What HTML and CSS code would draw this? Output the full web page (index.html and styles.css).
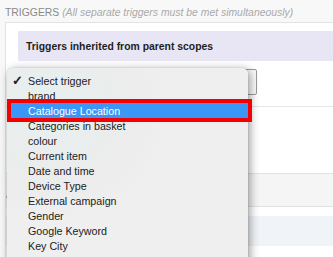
FILE: index.html
```html
<!DOCTYPE html>
<html>
<head>
<meta charset="utf-8">
<link rel="stylesheet" href="styles.css">
</head>
<body>
<div class="page">
  <div class="heading">TRIGGERS <em>(All separate triggers must be met simultaneously)</em></div>
  <div class="panel">
    <div class="inherited">Triggers inherited from parent scopes</div>
    <div class="select-row"><div class="select"></div></div>
    <div class="divider"></div>
    <div class="band grey"><span class="label">A</span></div>
    <div class="band blue"></div>
  </div>
  <ul class="menu">
    <li class="checked"><span class="check">✓</span>Select trigger</li>
    <li>brand</li>
    <li class="active">Catalogue Location</li>
    <li>Categories in basket</li>
    <li>colour</li>
    <li>Current item</li>
    <li>Date and time</li>
    <li>Device Type</li>
    <li>External campaign</li>
    <li>Gender</li>
    <li>Google Keyword</li>
    <li>Key City</li>
    <li>Homepage</li>
  </ul>
</div>
</body>
</html>
```

FILE: styles.css
```css
html, body {
  margin: 0;
  padding: 0;
  width: 333px;
  height: 257px;
  overflow: hidden;
  background: #f8f8f8;
  font-family: "Liberation Sans", Arial, sans-serif;
}
.page {
  position: relative;
  height: 257px;
  overflow: hidden;
}
.heading {
  height: 22px;
  padding-left: 5px;
  font-size: 10.4px;
  line-height: 26px;
  color: #8a8a8a;
  white-space: nowrap;
}
.heading em {
  color: #a9a9a9;
}
.panel {
  margin-left: 5px;
  margin-right: -20px;
  background: #fff;
  border: 1px solid #e3e3e3;
  height: 240px;
}
.inherited {
  margin: 8px 0 0 12px;
  height: 30px;
  background: #e8e6f4;
  font-size: 10.4px;
  font-weight: bold;
  color: #1e1e1e;
  line-height: 31px;
  padding-left: 8px;
}
.select-row {
  margin-top: 8px;
  height: 26px;
  padding-left: 11px;
}
.select {
  width: 238px;
  height: 24px;
  border: 1px solid #9a9a9a;
  border-radius: 2px;
  background: #fafafa;
}
.divider {
  margin-top: 11px;
  height: 1px;
  background: #e6e6e6;
}
.band {
  box-sizing: border-box;
}
.band.grey {
  margin-top: 66px;
  height: 34px;
  background: #f5f5f5;
  border-top: 1px solid #e2e2e2;
  border-bottom: 1px solid #e2e2e2;
  font-size: 10.4px;
  color: #8a8a8a;
  padding-top: 15px;
  line-height: 12px;
}
.band.blue {
  margin-top: 9px;
  height: 30px;
  background: #f0f4f8;
}
.menu {
  position: absolute;
  left: 7px;
  top: 68px;
  width: 241px;
  height: 200px;
  margin: 0;
  padding: 5px 0 0 0;
  list-style: none;
  box-sizing: border-box;
  border-radius: 6px;
  background: radial-gradient(ellipse 120px 110px at 40px 40px, #e6f0ef 0%, #ececec 70%, #efefef 100%);
  box-shadow: 2px 2px 10px rgba(0,0,0,0.4), 0 0 1px rgba(0,0,0,0.35);
  font-size: 10.7px;
  color: #222;
}
.menu li {
  height: 15px;
  line-height: 16px;
  padding-left: 21px;
  position: relative;
  white-space: nowrap;
}
.check {
  position: absolute;
  left: 5px;
  top: 0;
  font-size: 13px;
  font-weight: bold;
  color: #222;
}
.menu li.active {
  margin-left: 4px;
  padding-left: 17px;
  background: #3a96f7;
  color: #fff;
  outline: 4px solid #f50000;
}
```
